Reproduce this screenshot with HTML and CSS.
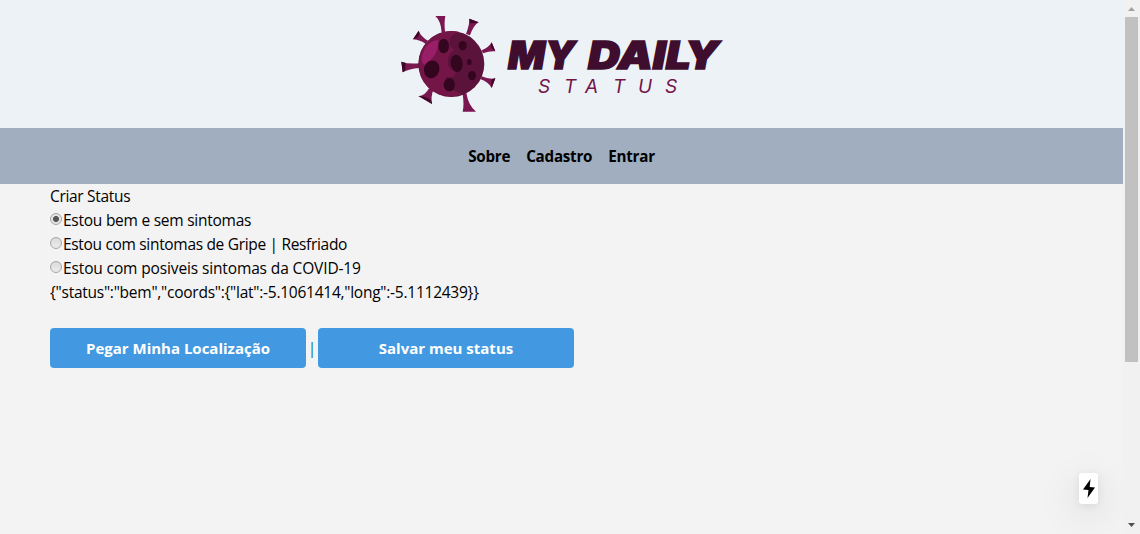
FILE: index.html
```html
<!DOCTYPE html>
<html lang="pt-BR">
<head>
<meta charset="utf-8">
<title>My Daily Status</title>
<link rel="stylesheet" href="styles.css">
</head>
<body>
<div class="window">
  <div class="page">
    <header class="header">
      <svg class="logo" viewBox="0 0 320 96" role="img" aria-label="My Daily Status">
        <g transform="scale(.33333) translate(-18 -24)">
          <g fill="#7a1750">
            <path d="M121 24H151Q147 43 150 72L140 74Q138 39 121 24Z"/>
            <path d="M223 32L251 43Q236 51 225 82L213 78Q224 49 223 32Z"/>
            <path d="M290 103L301 130Q285 128 264 136L260 127Q281 119 290 103Z"/>
            <path d="M260 205Q282 215 301 211L290 240Q280 222 257 214Z"/>
            <path d="M214 255Q220 292 243 311H203Q208 292 203 258Z"/>
            <path d="M115 246Q107 265 111 288L70 265Q91 263 102 241Z"/>
            <path d="M74 166V180Q42 182 23 193L19 161Q39 169 74 166Z"/>
            <path d="M99 98L92 108Q76 96 54 94L71 68Q78 86 99 98Z"/>
          </g>
          <g fill="#3f0829">
            <path d="M223 32L251 43Q235 48 224 45ZM290 103L301 130Q291 126 287 115ZM301 211L290 240Q287 226 290 214ZM72 264L111 288L108 276Q91 264 72 264ZM19 161L32 165L30 188L23 193ZM71 68L54 94L66 89Q76 80 71 68Z"/>
          </g>
          <circle cx="169" cy="168" r="99" fill="#5b133b"/>
          <path d="M169 69A99 99 0 0 0 116 251Q160 274 201 258Q151 241 155 206Q178 213 183 191Q157 187 158 157Q161 137 178 125Q157 112 165 90Q176 76 193 72Q181 69 169 69Z" fill="#741548"/>
          <path d="M130 96Q91 99 81 144Q76 164 89 171Q121 148 126 126Q132 106 130 96Z" fill="#981e68"/>
          <g fill="#34051e">
            <ellipse cx="146" cy="114" rx="16" ry="22"/>
            <ellipse cx="203" cy="113" rx="12" ry="14"/>
            <ellipse cx="185" cy="166" rx="18" ry="26" transform="rotate(-8 185 166)"/>
            <ellipse cx="110" cy="184" rx="23" ry="27" transform="rotate(18 110 184)"/>
            <ellipse cx="223" cy="162" rx="7" ry="9"/>
            <ellipse cx="231" cy="203" rx="12" ry="14"/>
            <ellipse cx="163" cy="230" rx="17" ry="20"/>
          </g>
        </g>
        <text class="logo-title" x="107" y="52.5" textLength="67" lengthAdjust="spacingAndGlyphs">MY</text>
        <text class="logo-title" x="187" y="52.5" textLength="131" lengthAdjust="spacingAndGlyphs">DAILY</text>
        <text class="logo-subtitle" x="137 163 184 212 237 264" y="76.5">STATUS</text>
      </svg>
    </header>
    <nav class="nav">
      <a class="nav-link">Sobre</a>
      <a class="nav-link">Cadastro</a>
      <a class="nav-link">Entrar</a>
    </nav>
    <main class="content">
      <div class="line tight">Criar Status</div>
      <label class="line"><span class="radio radio-checked"></span><span>Estou bem e sem sintomas</span></label>
      <label class="line tight"><span class="radio"></span><span>Estou com sintomas de Gripe | Resfriado</span></label>
      <label class="line loose"><span class="radio"></span><span>Estou com posiveis sintomas da COVID-19</span></label>
      <div class="line">{"status":"bem","coords":{"lat":-5.1061414,"long":-5.1112439}}</div>
      <div class="actions">
        <button class="button">Pegar Minha Localização</button>
        <span class="divider">|</span>
        <button class="button">Salvar meu status</button>
      </div>
    </main>
    <div class="badge">
      <svg class="bolt" viewBox="0 0 12 19"><path d="M7.5 0L0 10.5L5.5 11L4.5 19L12 8.5L6.7 8Z"/></svg>
    </div>
  </div>
  <div class="scrollbar">
    <svg class="arrow" viewBox="0 0 17 17"><path d="M5 11L8.5 7L12 11Z" fill="#a3a3a3"/></svg>
    <div class="thumb"></div>
    <svg class="arrow arrow-down" viewBox="0 0 17 17"><path d="M5 6L8.5 10L12 6Z" fill="#505050"/></svg>
  </div>
</div>
</body>
</html>
```

FILE: styles.css
```css
* { box-sizing: border-box; }
body {
  margin: 0;
  font: 15.5px/24px "Open Sans", "Noto Sans", sans-serif;
  color: #000;
  background: #f3f3f3;
}
.window { display: flex; height: 534px; overflow: hidden; }
.page { position: relative; flex: 1; background: #f3f3f3; overflow: hidden; }
.header { height: 128px; padding: 16px 1px 16px 0; display: flex; justify-content: center; background: #edf2f7; }
.logo { width: 320px; height: 96px; overflow: visible; }
.logo-title { font: italic 900 38px Inter, sans-serif; fill: #3f0d2e; stroke: #3f0d2e; stroke-width: 1.5px; }
.logo-subtitle { font: italic 400 19px Inter, sans-serif; fill: #741548; }
.nav { height: 56px; display: flex; align-items: center; justify-content: center; gap: 16px; background: #a0aec0; }
.nav-link { font-weight: 700; font-size: 15.2px; letter-spacing: -.25px; }
.content { padding: 0 50px; }
.line { display: flex; white-space: pre; height: 24px; letter-spacing: -.25px; }
.tight { letter-spacing: -.32px; }
.loose { letter-spacing: -.13px; }
.radio {
  width: 12px; height: 12px; margin: 5px 1px 0 0; border-radius: 50%;
  border: 1px solid #a6a6a6;
  background: linear-gradient(#dadada, #ececec);
}
.radio-checked { background: radial-gradient(circle, #555 0 2.6px, #e4e4e4 3.4px); }
.actions { display: flex; align-items: center; margin-top: 24px; }
.button {
  width: 256px; height: 40px; padding: 0; border: 0; border-radius: 4px;
  background: #4299e1; color: #fff;
  font: 700 15px/24px "Open Sans", "Noto Sans", sans-serif;
}
.divider { width: 12px; text-align: center; color: #087c9c; }
.badge {
  position: absolute; left: 1079px; top: 473px; width: 19px; height: 31px;
  display: flex; align-items: center; justify-content: center;
  background: #fff; border-radius: 3px;
  box-shadow: 0 11px 40px rgba(0,0,0,.15), 0 2px 10px rgba(0,0,0,.08);
}
.bolt { width: 12px; height: 19px; }
.scrollbar { width: 17px; display: flex; flex-direction: column; align-items: center; background: #f1f1f1; }
.arrow { width: 17px; height: 17px; }
.thumb { width: 13px; height: 345px; background: #c1c1c1; }
.arrow-down { margin-top: auto; }
```
